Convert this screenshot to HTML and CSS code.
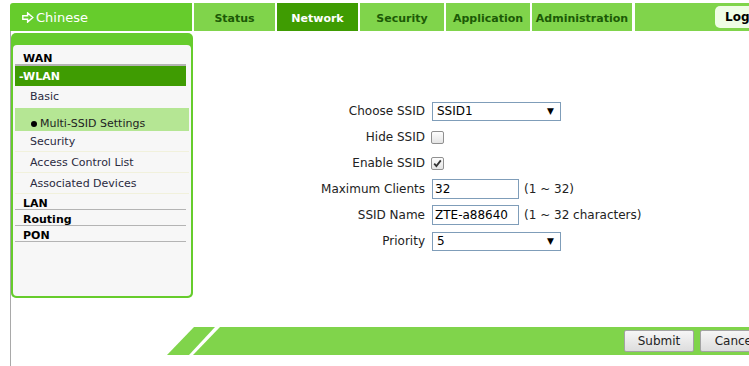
FILE: index.html
```html
<!DOCTYPE html>
<html>
<head>
<meta charset="utf-8">
<link rel="stylesheet" href="styles.css">
</head>
<body>
<div class="page">
  <div class="header">
    <div class="lang">
      <svg class="lang-icon" width="12" height="11" viewBox="0 0 12 11"><path d="M0.8 3.8 H5.6 V0.9 L10.8 5.5 L5.6 10.1 V7.2 H0.8 Z" fill="none" stroke="#fff" stroke-width="1.4" stroke-linejoin="miter"/></svg>
      <span>Chinese</span>
    </div>
    <div class="tabs">
      <div class="tab w81">Status</div>
      <div class="tab w81 active">Network</div>
      <div class="tab w84">Security</div>
      <div class="tab w84">Application</div>
      <div class="tab w100">Administration</div>
      <div class="tab filler"><div class="logout">Logout</div></div>
    </div>
  </div>
  <div class="main">
    <div class="row">
      <div class="sidebar">
        <div class="side-inner">
          <div class="menu-head first">WAN</div>
          <div class="menu-head open">-WLAN</div>
          <div class="sub basic">Basic</div>
          <div class="sub current"><span class="dot"></span>Multi-SSID Settings</div>
          <div class="sub">Security</div>
          <div class="sub">Access Control List</div>
          <div class="sub">Associated Devices</div>
          <div class="menu-head">LAN</div>
          <div class="menu-head">Routing</div>
          <div class="menu-head">PON</div>
        </div>
      </div>
      <div class="content">
        <div class="form">
          <div class="frow"><label class="flabel">Choose SSID</label><div class="select"><span>SSID1</span><span class="arrow">▼</span></div></div>
          <div class="frow"><label class="flabel">Hide SSID</label><span class="check"></span></div>
          <div class="frow"><label class="flabel">Enable SSID</label><span class="check"><svg width="9" height="9" viewBox="0 0 9 9"><path d="M1.2 4.6 L3.4 7 L7.8 1.4" fill="none" stroke="#333" stroke-width="1.8"/></svg></span></div>
          <div class="frow"><label class="flabel">Maximum Clients</label><input class="text" type="text" value="32"><span class="hint">(1 ~ 32)</span></div>
          <div class="frow"><label class="flabel">SSID Name</label><input class="text" type="text" value="ZTE-a88640"><span class="hint">(1 ~ 32 characters)</span></div>
          <div class="frow"><label class="flabel">Priority</label><div class="select"><span>5</span><span class="arrow">▼</span></div></div>
        </div>
      </div>
    </div>
    <div class="footer">
      <svg class="slant" width="53" height="28" viewBox="0 0 53 28"><polygon points="0,28 27,0 48,0 22,28" fill="#80d44b"/><polygon points="26,28 53,0 53,28" fill="#80d44b"/></svg>
      <div class="footer-bar">
        <button class="btn">Submit</button>
        <button class="btn">Cancel</button>
      </div>
    </div>
  </div>
</div>
</body>
</html>
```
FILE: styles.css
```css
html, body {
  margin: 0;
  padding: 0;
  overflow: hidden;
  background: #fff;
}
body {
  font-family: "DejaVu Sans", Verdana, sans-serif;
  font-size: 12px;
  color: #222;
}
.page {
  width: 790px;
  height: 366px;
  padding: 3px 0 0 10px;
  box-sizing: content-box;
}
.header {
  display: flex;
  height: 28px;
}
.lang {
  width: 182px;
  background: #66cc2c;
  color: #fff;
  display: flex;
  align-items: center;
  border-top-left-radius: 3px;
  font-size: 13px;
}
.lang-icon {
  margin-left: 12px;
  margin-right: 2px;
}
.tabs {
  display: flex;
  margin-left: 2px;
  gap: 2px;
  flex: 1;
}
.tab {
  background: #80d44b;
  color: #1c5a06;
  font-weight: bold;
  font-size: 11px;
  display: flex;
  align-items: center;
  justify-content: center;
  padding-top: 3px;
  box-sizing: border-box;
}
.w81 { width: 81px; }
.w84 { width: 84px; }
.w100 { width: 100px; }
.tab.active {
  background: #3f9c02;
  color: #fff;
}
.tab.filler {
  flex: 1;
  justify-content: flex-end;
  padding: 4px 15px 4px 0;
  margin-left: 1px;
}
.logout {
  width: 70px;
  height: 22px;
  background: #effde6;
  border-radius: 5px;
  color: #000;
  font-size: 12px;
  display: flex;
  align-items: center;
  padding-left: 10px;
  box-sizing: border-box;
}
.main {
  border-left: 1px solid #a9a9a9;
  height: 335px;
}
.row {
  display: flex;
}
.sidebar {
  width: 182px;
  height: 265px;
  margin-top: 2px;
  background: #66cc2c;
  border-radius: 5px;
  padding: 12px 2px 2px 2px;
  box-sizing: border-box;
}
.side-inner {
  background: #f7f7f7;
  height: 100%;
  border-radius: 4px;
  padding: 4px 2px 0 2px;
  box-sizing: border-box;
}
.menu-head {
  font-weight: bold;
  font-size: 11px;
  color: #000;
  height: 16px;
  line-height: 19px;
  padding-left: 8px;
  border-bottom: 1px solid #b4b4b4;
  margin-right: 3px;
  box-sizing: border-box;
}
.menu-head.first {
  height: 17px;
  line-height: 19px;
  border-bottom: 2px solid #b4b4b4;
}
.menu-head.open {
  background: #3f9c02;
  color: #fff;
  height: 20px;
  line-height: 21px;
  padding-left: 4px;
  border-bottom: none;
}
.sub {
  font-size: 11px;
  color: #2a2a40;
  height: 21px;
  line-height: 22px;
  padding-left: 15px;
  border-bottom: 1px solid #f1f1dc;
  box-sizing: border-box;
}
.sub.basic {
  height: 22px;
  line-height: 22px;
  border-bottom: none;
}
.sub.current {
  background: #b5e694;
  height: 23px;
  padding-left: 16px;
  color: #222;
  display: flex;
  align-items: center;
  padding-top: 9px;
  line-height: 14px;
  border-bottom: none;
}
.dot {
  width: 6px;
  height: 6px;
  border-radius: 50%;
  background: #000;
  margin-right: 3px;
  display: inline-block;
}
.content {
  flex: 1;
}
.form {
  margin-top: 67px;
}
.frow {
  display: flex;
  align-items: center;
  height: 26px;
}
.flabel {
  width: 232px;
  text-align: right;
  margin-right: 7px;
  color: #222;
  font-size: 12px;
}
.select {
  width: 129px;
  height: 19px;
  border: 1px solid #7f9db9;
  box-sizing: border-box;
  display: flex;
  align-items: center;
  justify-content: space-between;
  padding: 0 6px 0 4px;
  font-size: 12px;
  color: #000;
  background: #fff;
}
.arrow {
  font-size: 9px;
  color: #000;
}
.check {
  width: 13px;
  height: 13px;
  border: 1px solid #909090;
  border-radius: 2px;
  box-sizing: border-box;
  background: linear-gradient(#fdfdfd, #e4e4e4);
  display: inline-flex;
  align-items: center;
  justify-content: center;
  margin-left: -1px;
}
.text {
  width: 87px;
  height: 20px;
  border: 1px solid #7f9db9;
  box-sizing: border-box;
  padding: 0 2px;
  margin: 0;
  font-family: "DejaVu Sans", Verdana, sans-serif;
  font-size: 12px;
  color: #000;
  outline: none;
}
.hint {
  margin-left: 5px;
  font-size: 12px;
  color: #222;
}
.footer {
  display: flex;
  margin-top: 29px;
  margin-left: 156px;
  height: 28px;
}
.slant {
  display: block;
  flex: none;
}
.footer-bar {
  flex: 1;
  background: #80d44b;
  display: flex;
  justify-content: flex-end;
  align-items: center;
  gap: 6px;
  padding-right: 30px;
}
.btn {
  width: 70px;
  height: 22px;
  border: 1px solid #a3a3a3;
  border-radius: 2px;
  background: linear-gradient(#f6f6f6, #dddddd);
  font-family: "DejaVu Sans", Verdana, sans-serif;
  font-size: 12px;
  color: #222;
  padding: 0;
  margin: 0;
}
```
